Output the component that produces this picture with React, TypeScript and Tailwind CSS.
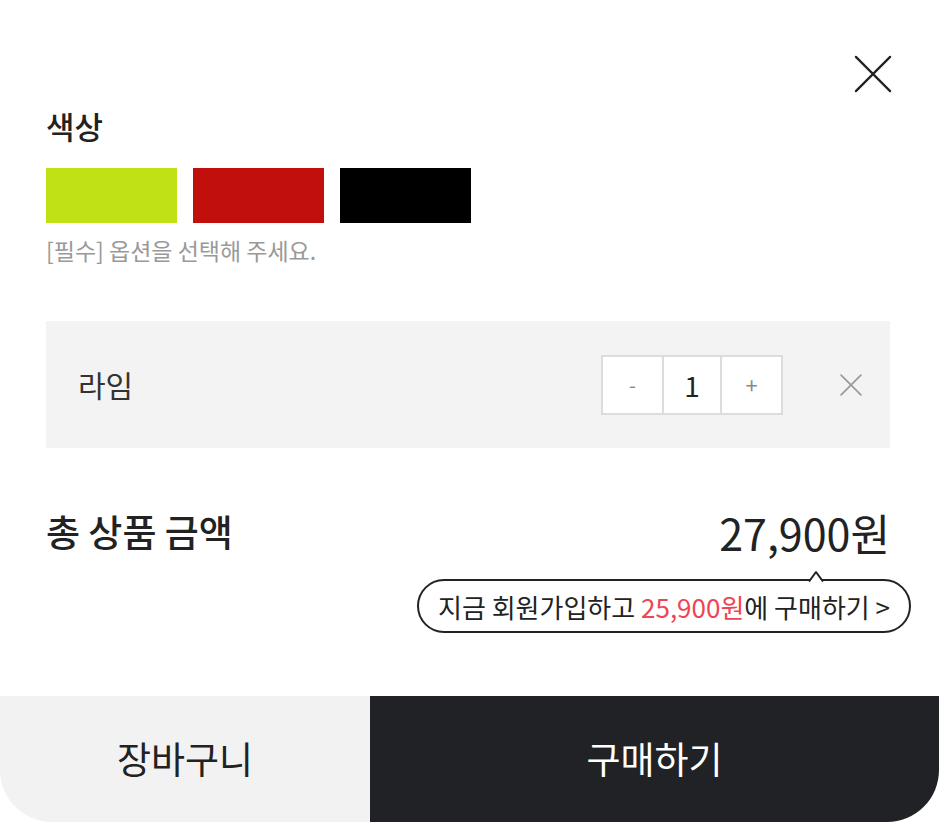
import React from "react";

const swatches = [
  { name: "라임", color: "bg-[#bfe116]" },
  { name: "레드", color: "bg-[#c1100b]" },
  { name: "블랙", color: "bg-[#000000]" },
];

function CloseIcon({ size, stroke, className }: { size: number; stroke: number; className?: string }) {
  return (
    <svg width={size} height={size} viewBox="0 0 40 40" className={className} fill="none">
      <path d="M2 2L38 38M38 2L2 38" stroke="currentColor" strokeWidth={stroke} strokeLinecap="round" />
    </svg>
  );
}

export default function App() {
  return (
    <div className="flex min-h-[822px] w-[939px] flex-col bg-white font-['Noto_Sans_CJK_KR','Noto_Sans',sans-serif] text-[#222]">
      <div className="flex-1 pl-[46px] pr-[49px]">
        <div className="flex justify-end pt-[55px]">
          <button className="-mr-[2px] text-[#222]">
            <CloseIcon size={38} stroke={2.4} />
          </button>
        </div>

        <div className="mt-[19px] flex h-[28px] items-center text-[31px] font-medium">색상</div>

        <div className="mt-[28px] flex gap-[16px]">
          {swatches.map((s) => (
            <button key={s.name} className={`h-[55px] w-[131px] ${s.color}`} aria-label={s.name} />
          ))}
        </div>

        <p className="mt-[15px] flex h-[24px] items-center text-[23px] text-[#999]">[필수] 옵션을 선택해 주세요.</p>

        <div className="mt-[59px] flex h-[127px] items-center bg-[#f3f3f3] pl-[32px] pr-[28px]">
          <span className="flex-1 text-[30px] text-[#333]">라임</span>
          <div className="flex h-[60px] border-2 border-[#dcdcdc] bg-white">
            <button className="flex w-[59px] items-center justify-center text-[20px] text-[#888]">-</button>
            <div className="flex w-[60px] items-center justify-center border-x-2 border-[#dcdcdc] text-[28px] text-[#222]">1</div>
            <button className="flex w-[59px] items-center justify-center text-[22px] text-[#888]">+</button>
          </div>
          <button className="ml-[57px] text-[#999]">
            <CloseIcon size={22} stroke={3} />
          </button>
        </div>

        <div className="mt-[64px] flex h-[40px] items-center justify-between">
          <span className="text-[37px] font-medium">총 상품 금액</span>
          <span className="text-[43px]">27,900원</span>
        </div>

        <div className="mt-[27px] -mr-[21px] flex justify-end">
          <div className="relative flex h-[54px] w-[494px] items-center rounded-full border-2 border-[#222] bg-white pl-[19px] text-[26px] text-[#222]">
            <svg width="16" height="12" viewBox="0 0 16 12" className="absolute -top-[11px] left-[389px]">
              <path d="M1 11.5L8 2L15 11.5" fill="white" stroke="#222" strokeWidth="2" strokeLinejoin="round" />
            </svg>
            <span className="whitespace-nowrap">
              지금 회원가입하고 <span className="text-[#ef4452]">25,900원</span>에 구매하기 &gt;
            </span>
          </div>
        </div>
      </div>

      <div className="flex h-[126px] overflow-hidden rounded-b-[52px]">
        <button className="flex w-[370px] items-center justify-center bg-[#f2f2f2] text-[37px] text-[#222]">장바구니</button>
        <button className="flex flex-1 items-center justify-center bg-[#212226] text-[37px] text-white">구매하기</button>
      </div>
    </div>
  );
}
